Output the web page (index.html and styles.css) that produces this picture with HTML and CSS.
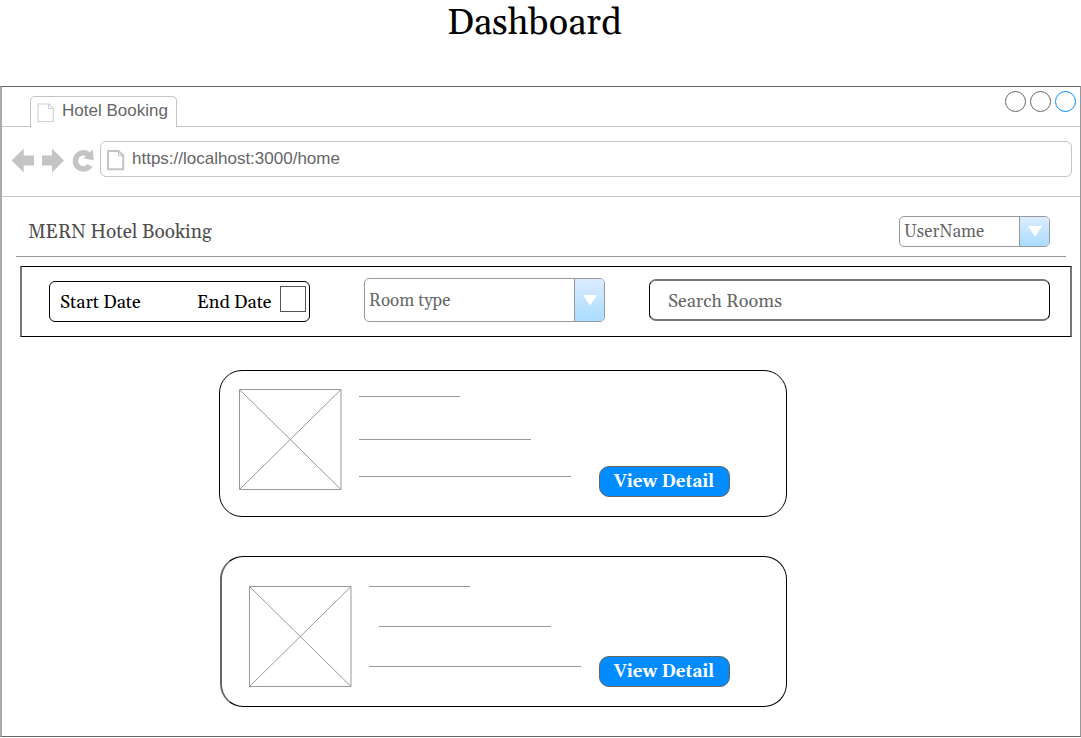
FILE: index.html
```html
<!DOCTYPE html>
<html lang="en">
<head>
<meta charset="utf-8">
<title>Dashboard</title>
<link rel="stylesheet" href="styles.css">
</head>
<body>
<h1 class="title"><span class="t-title">Dashboard</span></h1>
<main class="browser">
  <div class="tabs">
    <div class="tab">
      <svg class="tab-icon" width="18" height="20" viewBox="0 0 18 20"><path d="M1 1H12L16.3 5.3V18.5H1Z M11.5 1V5.5H16.3" fill="none" stroke="#d2d2d2" stroke-width="1.2"/></svg>
      <span>Hotel Booking</span>
    </div>
    <div class="dots"><i class="dot"></i><i class="dot"></i><i class="dot dot-blue"></i></div>
  </div>
  <div class="address">
    <svg class="nav" width="86" height="26" viewBox="0 0 86 26">
      <g fill="#c4c4c4"><path d="M-.3 12.5L11.7 .5V7.5H22V17.5H11.7V24.5Z"/><path d="M52 12.5L40 .5V7.5H30V17.5H40V24.5Z"/><path d="M80.6 1L81.8 12.2L71 10.2L74 8.2A5.3 5.3 0 1 0 75.7 16L80.4 19A10.8 10.8 0 1 1 78 4.3Z"/></g>
    </svg>
    <div class="url">
      <svg width="18" height="21" viewBox="0 0 18 21"><path d="M1 1H11.5L16.2 5.7V19.3H1Z" fill="none" stroke="#c4c4c4" stroke-width="2"/><path d="M11.5 1V5.7H16.2" fill="none" stroke="#c4c4c4"/></svg>
      <span>https://localhost:3000/home</span>
    </div>
  </div>
  <header class="header">
    <span class="brand">MERN Hotel Booking</span>
    <div class="select user"><span class="select-text t-user">UserName</span><span class="arrow"><svg width="14" height="11" viewBox="0 0 14 11"><path d="M0 0H14L7 10.5Z" fill="#fff"/></svg></span></div>
  </header>
  <section class="filters">
    <div class="dates"><span class="t-start">Start Date</span><span class="t-end">End Date</span><i class="check"></i></div>
    <div class="select room"><span class="select-text t-room">Room type</span><span class="arrow"><svg width="14" height="11" viewBox="0 0 14 11"><path d="M0 0H14L7 10.5Z" fill="#fff"/></svg></span></div>
    <div class="search"><span class="t-search">Search Rooms</span></div>
  </section>
  <article class="card card-a">
    <svg class="picture" width="103" height="101" viewBox="0 0 103 101"><path d="M.5 .5H102V100.5H.5ZL102 100.5M102 .5L.5 100.5" fill="none" stroke="#999"/></svg>
    <div class="lines"><i class="line short"></i><i class="line medium"></i><i class="line long"></i></div>
    <button class="button"><span class="t-button">View Detail</span></button>
  </article>
  <article class="card card-b">
    <svg class="picture" width="103" height="101" viewBox="0 0 103 101"><path d="M.5 .5H102V100.5H.5ZL102 100.5M102 .5L.5 100.5" fill="none" stroke="#999"/></svg>
    <div class="lines"><i class="line short"></i><i class="line medium"></i><i class="line long"></i></div>
    <button class="button"><span class="t-button">View Detail</span></button>
  </article>
</main>
</body>
</html>
```
FILE: styles.css
```css
* { box-sizing: border-box; }
body { margin: 0; height: 738px; overflow: hidden; background: #fff; font: 18px/22px Georgia, Gelasio, "Liberation Serif", serif; color: #000; }
span { white-space: nowrap; }
svg { display: block; flex: none; overflow: visible; }
.title { margin: 0; height: 86px; padding: 2px 0 0 447px; font-size: 36px; line-height: 43px; font-weight: 400; }
.browser { height: 651px; border: 1px solid #666; border-left: 2px solid #a9a9a9; border-right-color: #999; }
.tabs { display: flex; justify-content: space-between; height: 40px; border-bottom: 1px solid #c4c4c4; padding: 4px 4px 0 28px; }
.tab { display: flex; width: 147px; height: 31px; margin-top: 5px; padding: 5px 0 0 6px; gap: 7px; border: 1px solid #c4c4c4; border-bottom: 0; border-radius: 5px 5px 0 0; background: #fff; font: 17px/18px "Liberation Sans", Arial, sans-serif; color: #666; }
.tab-icon { margin-top: 1px; }
.dots { display: flex; gap: 4px; }
.dot { width: 21px; height: 21px; border: 1px solid #666; border-radius: 50%; }
.dot-blue { border-color: #008cff; }
.address { display: flex; height: 70px; padding: 14px 9px 0 10px; border-bottom: 1px solid #c4c4c4; }
.nav { margin: 7px 2px 0 0; }
.url { display: flex; width: 972px; flex: none; height: 36px; padding: 8px 0 0 6px; gap: 7px; border: 1px solid #c4c4c4; border-radius: 6px; font: 17px/18px "Liberation Sans", Arial, sans-serif; color: #666; }
.header { display: flex; justify-content: space-between; width: 1050px; height: 60px; margin-left: 14px; padding: 19px 16px 0 12px; border-bottom: 1px solid #999; }
.brand { padding-top: 5px; color: #4d4d4d; font-size: 19px; }
.select { display: flex; border: 1px solid #999; border-radius: 5px; overflow: hidden; color: #666; font-size: 17px; }
.select-text { flex: 1; padding: 1px 0 0 4px; align-self: center; }
.arrow { display: flex; width: 31px; align-items: center; justify-content: center; border-left: 1px solid #999; background: linear-gradient(#dbecff, #aadcff); }
.select .arrow { width: 30px; }
.user { width: 151px; height: 31px; }
.filters { display: flex; width: 1052px; height: 71px; margin: 9px 0 0 18px; border: 1px solid #000; border-left: 2px solid #777; border-right: 2px solid #777; }
.dates { display: flex; width: 261px; height: 41px; margin: 14px 0 0 27px; padding: 4px 3px 0 10px; border: 1px solid #000; border-radius: 6px; line-height: 33px; }
.t-start { width: 137px; }
.t-end { width: 83px; }
.check { width: 26px; height: 26px; border: 1px solid #555; }
.room { width: 241px; height: 44px; margin: 11px 0 0 54px; }
.t-room { padding-top: 2px; }
.search { width: 401px; height: 42px; margin: 12px 0 0 44px; padding: 10px 0 0 18px; border: 1px solid #000; border-top: 2px solid #777; border-bottom: 2px solid #777; border-radius: 7px; color: #666; line-height: 22px; }
.card { display: flex; border: 1px solid #000; border-radius: 23px; }
.card-a { width: 568px; height: 147px; margin: 33px 0 0 217px; padding: 18px 0 0 19px; }
.card-b { width: 567px; height: 151px; margin: 39px 0 0 218px; padding: 29px 0 0 27px; border-left: 2px solid #666; }
.lines { display: flex; flex-direction: column; width: 212px; margin-left: 17px; }
.line { height: 1px; background: #999; }
.card-a .short { margin-top: 7px; }
.card-a .medium { margin-top: 42px; }
.card-a .long { margin-top: 36px; }
.card-b .medium { margin: 39px 0 0 10px; }
.card-b .long { margin-top: 39px; }
.short { width: 101px; }
.medium { width: 172px; }
.long { width: 212px; }
.button { width: 131px; height: 31px; margin-left: 28px; padding: 0; border: 1px solid #666; border-radius: 10px; background: #008cff; color: #fff; font: bold 17px/29px Georgia, Gelasio, "Liberation Serif", serif; }
.t-button { display: block; margin-left: -1px; padding-top: 1px; line-height: 28px; }
.card-a .button { margin-top: 77px; }
.card-b .button { margin: 70px 0 0 18px; }
```
